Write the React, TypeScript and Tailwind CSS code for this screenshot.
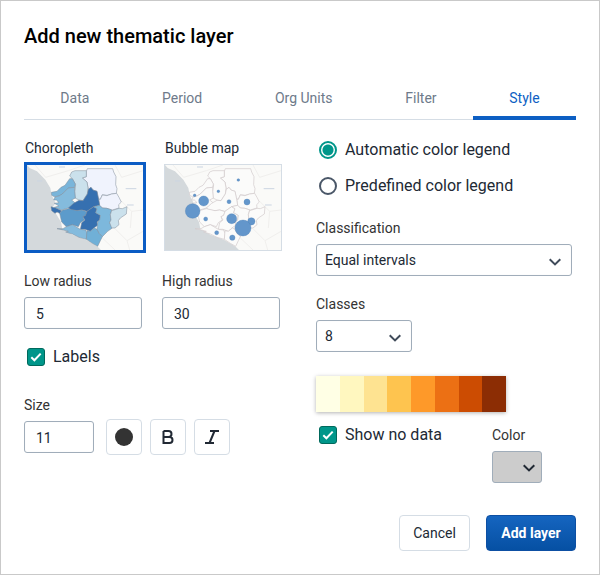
import { useState } from 'react';
import type { ReactNode } from 'react';
import clsx from 'clsx';

type Region = { points: string; fill: string };

const regions: Region[] = [
  { fill: '#f0f3fd', points: '214,110 217,102 293,102 296,112 303,126 302,150 306,162 304,176 290,178 276,182 262,180 256,194 250,192 246,170 234,166 228,158 220,164 216,142 202,130 214,126' },
  { fill: '#f0f3fd', points: '262,181 276,183 290,178 305,176 312,188 319,202 311,210 312,220 292,226 276,221 262,220 254,212 251,194 256,194' },
  { fill: '#cbe1ec', points: '170,112 180,108 214,108 214,126 202,130 216,142 219,160 217,178 204,198 192,196 180,190 179,170 182,150 172,132 164,124' },
  { fill: '#79b5da', points: '109,173 126,170 138,158 150,152 164,132 172,132 181,148 179,158 160,160 142,178 132,184 118,186 110,182' },
  { fill: '#84bbdd', points: '120,187 132,184 142,178 160,160 179,158 179,170 181,190 170,196 182,206 160,220 140,226 118,218 132,214 118,206 132,204 124,196 116,196' },
  { fill: '#3670b0', points: '160,220 176,206 192,197 204,198 217,178 220,164 228,158 234,166 246,170 251,194 254,212 236,216 216,230 200,226 186,228 168,226' },
  { fill: '#3670b0', points: '108,216 122,220 140,228 134,236 126,232 120,236 110,228' },
  { fill: '#5c9bcb', points: '134,236 142,227 160,222 186,228 200,226 216,231 212,242 204,246 208,256 196,264 190,276 172,270 154,276 140,262' },
  { fill: '#3670b0', points: '216,230 236,216 246,222 242,234 256,242 254,256 246,262 248,272 234,282 226,290 210,284 196,284 200,264 210,256 204,246 212,242' },
  { fill: '#7db8dc', points: '236,216 254,212 262,220 276,221 290,226 286,240 288,256 284,264 292,280 278,290 262,306 252,296 246,284 248,262 254,256 256,242 242,234 246,222' },
  { fill: '#cbe1ec', points: '290,228 312,221 322,222 336,216 334,238 316,250 310,258 312,270 300,280 290,280 284,264 288,256 286,240' },
  { fill: '#84bbdd', points: '126,282 144,282 154,276 172,270 196,284 212,286 216,296 214,314 192,308 172,298 152,292 160,290 146,286' },
  { fill: '#70b0d7', points: '216,288 226,290 238,280 246,284 252,296 262,306 256,318 248,335 232,326 214,314' },
];

const bubbles: [number, number, number][] = [
  [256, 136, 4], [196, 170, 4], [125, 182, 4], [152, 199, 15], [228, 201, 6], [282, 202, 9],
  [119, 229, 22], [158, 253, 6], [236, 252, 15], [295, 260, 11], [270, 280, 24], [191, 294, 6], [238, 309, 8],
];

function MapPreview({ kind }: { kind: 'choropleth' | 'bubble' }) {
  const filled = kind === 'choropleth';
  return (
    <svg viewBox="36 91 348 255" className="block h-[85px] w-[116px]" aria-hidden="true">
      <rect x="36" y="91" width="348" height="255" fill="#fafaf8" />
      <path d="M36 91 44 100 66 110 91 135 106 160 110 182 122 206 110 220 122 236 138 262 142 282 172 300 214 316 248 336 258 346H36Z" fill="#d4d9dc" />
      <g fill="none" stroke="#f0efed" strokeWidth="3">
        <path d="M60 91 92 128 160 108 210 91M300 91 320 128 384 108M320 200 350 230 384 226M300 282 336 318 384 290M262 310 300 346M336 318 344 346M350 230 346 280" />
      </g>
      <g stroke="#cbd5e2" strokeWidth="3">
        <path d="M132 97H150M332 162H364M66 139H82M336 211H356" />
      </g>
      <g stroke={filled ? '#7f8b99' : '#d0c8ca'} strokeWidth={filled ? 1.5 : 2} strokeLinejoin="round">
        {regions.map((region) => (
          <polygon key={region.points} points={region.points} fill={filled ? region.fill : '#fbfbfa'} />
        ))}
      </g>
      {!filled && (
        <g fill="#6396cb" stroke="#4a7cb4" strokeWidth="1">
          {bubbles.map(([x, y, r]) => (
            <circle key={`${x}-${y}`} cx={x} cy={y} r={r} />
          ))}
        </g>
      )}
    </svg>
  );
}

function Chevron({ className }: { className: string }) {
  return (
    <svg viewBox="0 0 12 8" className={clsx('pointer-events-none absolute h-2 w-3', className)} fill="none" stroke="currentColor" strokeWidth="2" aria-hidden="true">
      <path d="M0.7 1.2 6 6.4 11.3 1.2" />
    </svg>
  );
}

function Checkbox({ label }: { label: string }) {
  const [checked, setChecked] = useState(true);
  return (
    <label className="flex h-5 items-center gap-2 pl-[3px] text-base">
      <span className="relative size-[18px]">
        <input
          type="checkbox"
          checked={checked}
          onChange={() => setChecked(!checked)}
          className="block size-[18px] appearance-none rounded-[3px] border border-[#4a5768] bg-white checked:border-[#00695c] checked:bg-[#00968a]"
        />
        {checked && (
          <svg viewBox="0 0 18 18" className="pointer-events-none absolute inset-0 size-[18px]" fill="none" stroke="white" strokeWidth="2" aria-hidden="true">
            <path d="M4.3 9.2 7.4 12.3 13.7 5.6" />
          </svg>
        )}
      </span>
      {label}
    </label>
  );
}

function Radio({ label, checked, onChange }: { label: string; checked: boolean; onChange: () => void }) {
  return (
    <label className="flex h-5 items-center gap-2 pl-[3px] text-base">
      <input
        type="radio"
        name="legend"
        checked={checked}
        onChange={onChange}
        className="size-[18px] appearance-none rounded-full border-2 border-[#4a5768] bg-white checked:border-[#00968a] checked:bg-[radial-gradient(circle,#00968a_5px,white_6px)]"
      />
      {label}
    </label>
  );
}

function NumberField({ id, label, value, className }: { id: string; label: string; value: string; className: string }) {
  return (
    <div className={className}>
      <label htmlFor={id} className="block text-sm leading-5 text-[#333]">{label}</label>
      <input id={id} defaultValue={value} inputMode="numeric" className="mt-1.5 block h-8 w-full rounded-[3px] border border-[#a0adba] bg-white px-[11px] pt-0.5 text-sm shadow-[inset_0_0_1px_#303f4f1a]" />
    </div>
  );
}

function SelectField({ id, label, options, className }: { id: string; label: string; options: string[]; className: string }) {
  return (
    <div>
      <label htmlFor={id} className="block text-sm leading-5 text-[#333]">{label}</label>
      <div className={clsx('relative mt-1.5', className)}>
        <select id={id} className="block h-8 w-full appearance-none rounded-[3px] border border-[#a0adba] bg-white px-2 text-sm shadow-[inset_0_0_1px_#303f4f1a]">
          {options.map((option) => (
            <option key={option}>{option}</option>
          ))}
        </select>
        <Chevron className="top-[14px] right-[11px] text-[#404b5a]" />
      </div>
    </div>
  );
}

function PreviewOption({ label, selected, onSelect, children }: { label: string; selected: boolean; onSelect: () => void; children: ReactNode }) {
  return (
    <button type="button" aria-pressed={selected} onClick={onSelect} className="flex flex-col text-left">
      <span className="pl-px text-sm leading-5">{label}</span>
      <span className="mt-1 flex h-[91px] items-center">
        <span className={clsx('block', selected ? 'border-3 border-[#0b5cc4]' : 'border border-[#d5dde5]')}>{children}</span>
      </span>
    </button>
  );
}

function ToolButton({ label, children }: { label: string; children: ReactNode }) {
  return (
    <button type="button" aria-label={label} className="flex size-9 items-center justify-center rounded-[4px] border border-[#d5dde5] bg-white">
      {children}
    </button>
  );
}

const tabs = ['Data', 'Period', 'Org Units', 'Filter', 'Style'];

const legendColors = ['#ffffe5', '#fff7bf', '#fee391', '#fec44f', '#fe9929', '#ec7014', '#cc4c02', '#8c2d04'];

export default function App() {
  const [tab, setTab] = useState('Style');
  const [map, setMap] = useState('Choropleth');
  const [legend, setLegend] = useState('auto');

  return (
    <main className="min-h-screen border border-[#c9c9c9] bg-white px-[23px] pt-[23px] pb-[23px] font-[Roboto,sans-serif] text-[#212934]">
      <h1 className="text-xl leading-6 font-medium text-black">Add new thematic layer</h1>

      <div role="tablist" className="mt-7 flex h-11 border-b border-[#d5dde5]">
        {tabs.map((name) => (
          <button
            key={name}
            type="button"
            role="tab"
            aria-selected={tab === name}
            onClick={() => setTab(name)}
            className={clsx(
              '-mb-px flex-auto border-b-4 pt-1 text-sm',
              tab === name ? 'border-[#0d5fc3] text-[#0d5fc3]' : 'border-transparent text-[#6e7a8a]',
            )}
          >
            {name}
          </button>
        ))}
      </div>

      <div className="mt-[18px] grid grid-cols-2 gap-4">
        <section>
          <div className="flex gap-[18px]">
            <PreviewOption label="Choropleth" selected={map === 'Choropleth'} onSelect={() => setMap('Choropleth')}>
              <MapPreview kind="choropleth" />
            </PreviewOption>
            <PreviewOption label="Bubble map" selected={map === 'Bubble map'} onSelect={() => setMap('Bubble map')}>
              <MapPreview kind="bubble" />
            </PreviewOption>
          </div>
          <div className="mt-[18px] flex gap-5">
            <NumberField id="low" label="Low radius" value="5" className="w-[118px]" />
            <NumberField id="high" label="High radius" value="30" className="w-[118px]" />
          </div>
          <div className="mt-[18px]">
            <Checkbox label="Labels" />
          </div>
          <div className="mt-7 flex items-end gap-3">
            <NumberField id="size" label="Size" value="11" className="w-[70px]" />
            <div className="-mb-0.5 flex gap-2">
              <ToolButton label="Text color">
                <span className="size-[18px] rounded-full bg-[#333]" />
              </ToolButton>
              <ToolButton label="Bold">
                <svg viewBox="0 0 18 18" className="size-[18px]" fill="none" stroke="#212934" strokeWidth="2" aria-hidden="true">
                  <path d="M4.5 3H9.5A3 3 0 0 1 9.5 9H4.5M4.5 9H10.5A3 3 0 0 1 10.5 15H4.5V3" />
                </svg>
              </ToolButton>
              <ToolButton label="Italic">
                <svg viewBox="0 0 18 18" className="size-[18px]" fill="none" stroke="#212934" strokeWidth="2" aria-hidden="true">
                  <path d="M7 3H16M2 15H11M11.5 3 6.5 15" />
                </svg>
              </ToolButton>
            </div>
          </div>
        </section>

        <section className="pr-1 pl-2">
          <div className="flex flex-col gap-4 pt-0.5">
            <Radio label="Automatic color legend" checked={legend === 'auto'} onChange={() => setLegend('auto')} />
            <Radio label="Predefined color legend" checked={legend === 'predefined'} onChange={() => setLegend('predefined')} />
          </div>
          <div className="mt-[22px] flex flex-col gap-[18px]">
            <SelectField id="classification" label="Classification" options={['Equal intervals', 'Equal counts']} className="w-full" />
            <SelectField id="classes" label="Classes" options={['8', '7', '6', '5', '4', '3']} className="w-24" />
          </div>
          <div className="mt-6 flex h-9 w-[190px] shadow-[0_1px_4px_#0000004d]" role="img" aria-label="Color scale">
            {legendColors.map((color) => (
              <span key={color} className="flex-1" style={{ backgroundColor: color }} />
            ))}
          </div>
          <div className="mt-[13px] flex">
            <div className="w-44">
              <Checkbox label="Show no data" />
            </div>
            <div>
              <span id="nodata-color" className="block text-sm leading-5 text-[#333]">Color</span>
              <button type="button" aria-labelledby="nodata-color" className="relative mt-1.5 block h-8 w-[50px] rounded-[3px] border border-[#a0adba] bg-[#ccc]">
                <Chevron className="top-[12px] right-[6px] text-[#212934]" />
              </button>
            </div>
          </div>
        </section>
      </div>

      <footer className="mt-8 flex justify-end gap-4 text-sm">
        <button type="button" className="h-9 min-w-[71px] rounded-[4px] border border-[#d5dde5] bg-white px-3">Cancel</button>
        <button type="button" className="h-9 min-w-[90px] rounded-[4px] border border-[#0d4fa3] bg-linear-to-b from-[#1565c0] to-[#0650a3] px-3 font-bold text-white">Add layer</button>
      </footer>
    </main>
  );
}
